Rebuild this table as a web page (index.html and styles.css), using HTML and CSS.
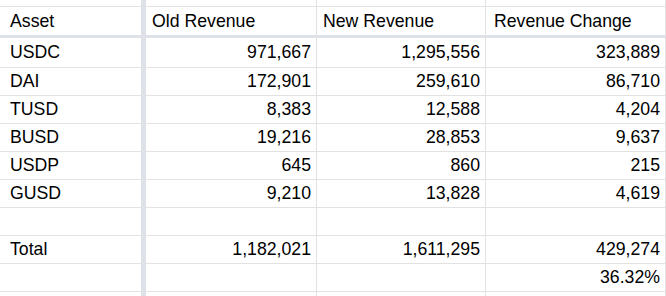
FILE: index.html
```html
<!DOCTYPE html>
<html>
<head>
<meta charset="utf-8">
<link rel="stylesheet" href="styles.css">
</head>
<body>
<div class="sheet">
  <div class="row row-top"><div class="c c1"></div><div class="c"></div><div class="c"></div><div class="c"></div></div>
  <div class="row row-head"><div class="c c1">Asset</div><div class="c">Old Revenue</div><div class="c">New Revenue</div><div class="c">Revenue Change</div></div>
  <div class="row row-first"><div class="c c1">USDC</div><div class="c n">971,667</div><div class="c n">1,295,556</div><div class="c n">323,889</div></div>
  <div class="row"><div class="c c1">DAI</div><div class="c n">172,901</div><div class="c n">259,610</div><div class="c n">86,710</div></div>
  <div class="row"><div class="c c1">TUSD</div><div class="c n">8,383</div><div class="c n">12,588</div><div class="c n">4,204</div></div>
  <div class="row"><div class="c c1">BUSD</div><div class="c n">19,216</div><div class="c n">28,853</div><div class="c n">9,637</div></div>
  <div class="row"><div class="c c1">USDP</div><div class="c n">645</div><div class="c n">860</div><div class="c n">215</div></div>
  <div class="row"><div class="c c1">GUSD</div><div class="c n">9,210</div><div class="c n">13,828</div><div class="c n">4,619</div></div>
  <div class="row"><div class="c c1"></div><div class="c"></div><div class="c"></div><div class="c"></div></div>
  <div class="row"><div class="c c1">Total</div><div class="c n">1,182,021</div><div class="c n">1,611,295</div><div class="c n">429,274</div></div>
  <div class="row"><div class="c c1"></div><div class="c"></div><div class="c"></div><div class="c n">36.32%</div></div>
  <div class="row row-end"><div class="c c1"></div><div class="c"></div><div class="c"></div><div class="c"></div></div>
</div>
</body>
</html>
```

FILE: styles.css
```css
html, body {
  margin: 0;
  padding: 0;
  background: #ffffff;
}
body {
  font-family: "Liberation Sans", Arial, sans-serif;
  font-size: 17.7px;
  color: #000000;
}
.sheet {
  display: flex;
  flex-direction: column;
  width: 666px;
  height: 296px;
  overflow: hidden;
}
.row {
  display: grid;
  grid-template-columns: 146px 171px 169px 180px;
  height: 28px;
  flex: none;
}
.row-top { height: 7px; }
.row-head { height: 31px; }
.row-first { height: 30px; }
.row-end { height: 4px; }
.row-end .c { border-bottom: 0; }
.c {
  box-sizing: border-box;
  border-right: 1px solid #e2e2e3;
  border-bottom: 1px solid #e2e2e3;
  display: flex;
  align-items: center;
  padding: 0 6px;
  white-space: nowrap;
  overflow: hidden;
}
.c1 {
  border-right: 5px solid #dee1e7;
  padding-left: 10px;
}
.row-head .c {
  border-bottom: 3px solid #dee1e7;
}
.row-head .c:last-child {
  padding-left: 8px;
}
.n {
  justify-content: flex-end;
  padding-right: 5px;
}
```
